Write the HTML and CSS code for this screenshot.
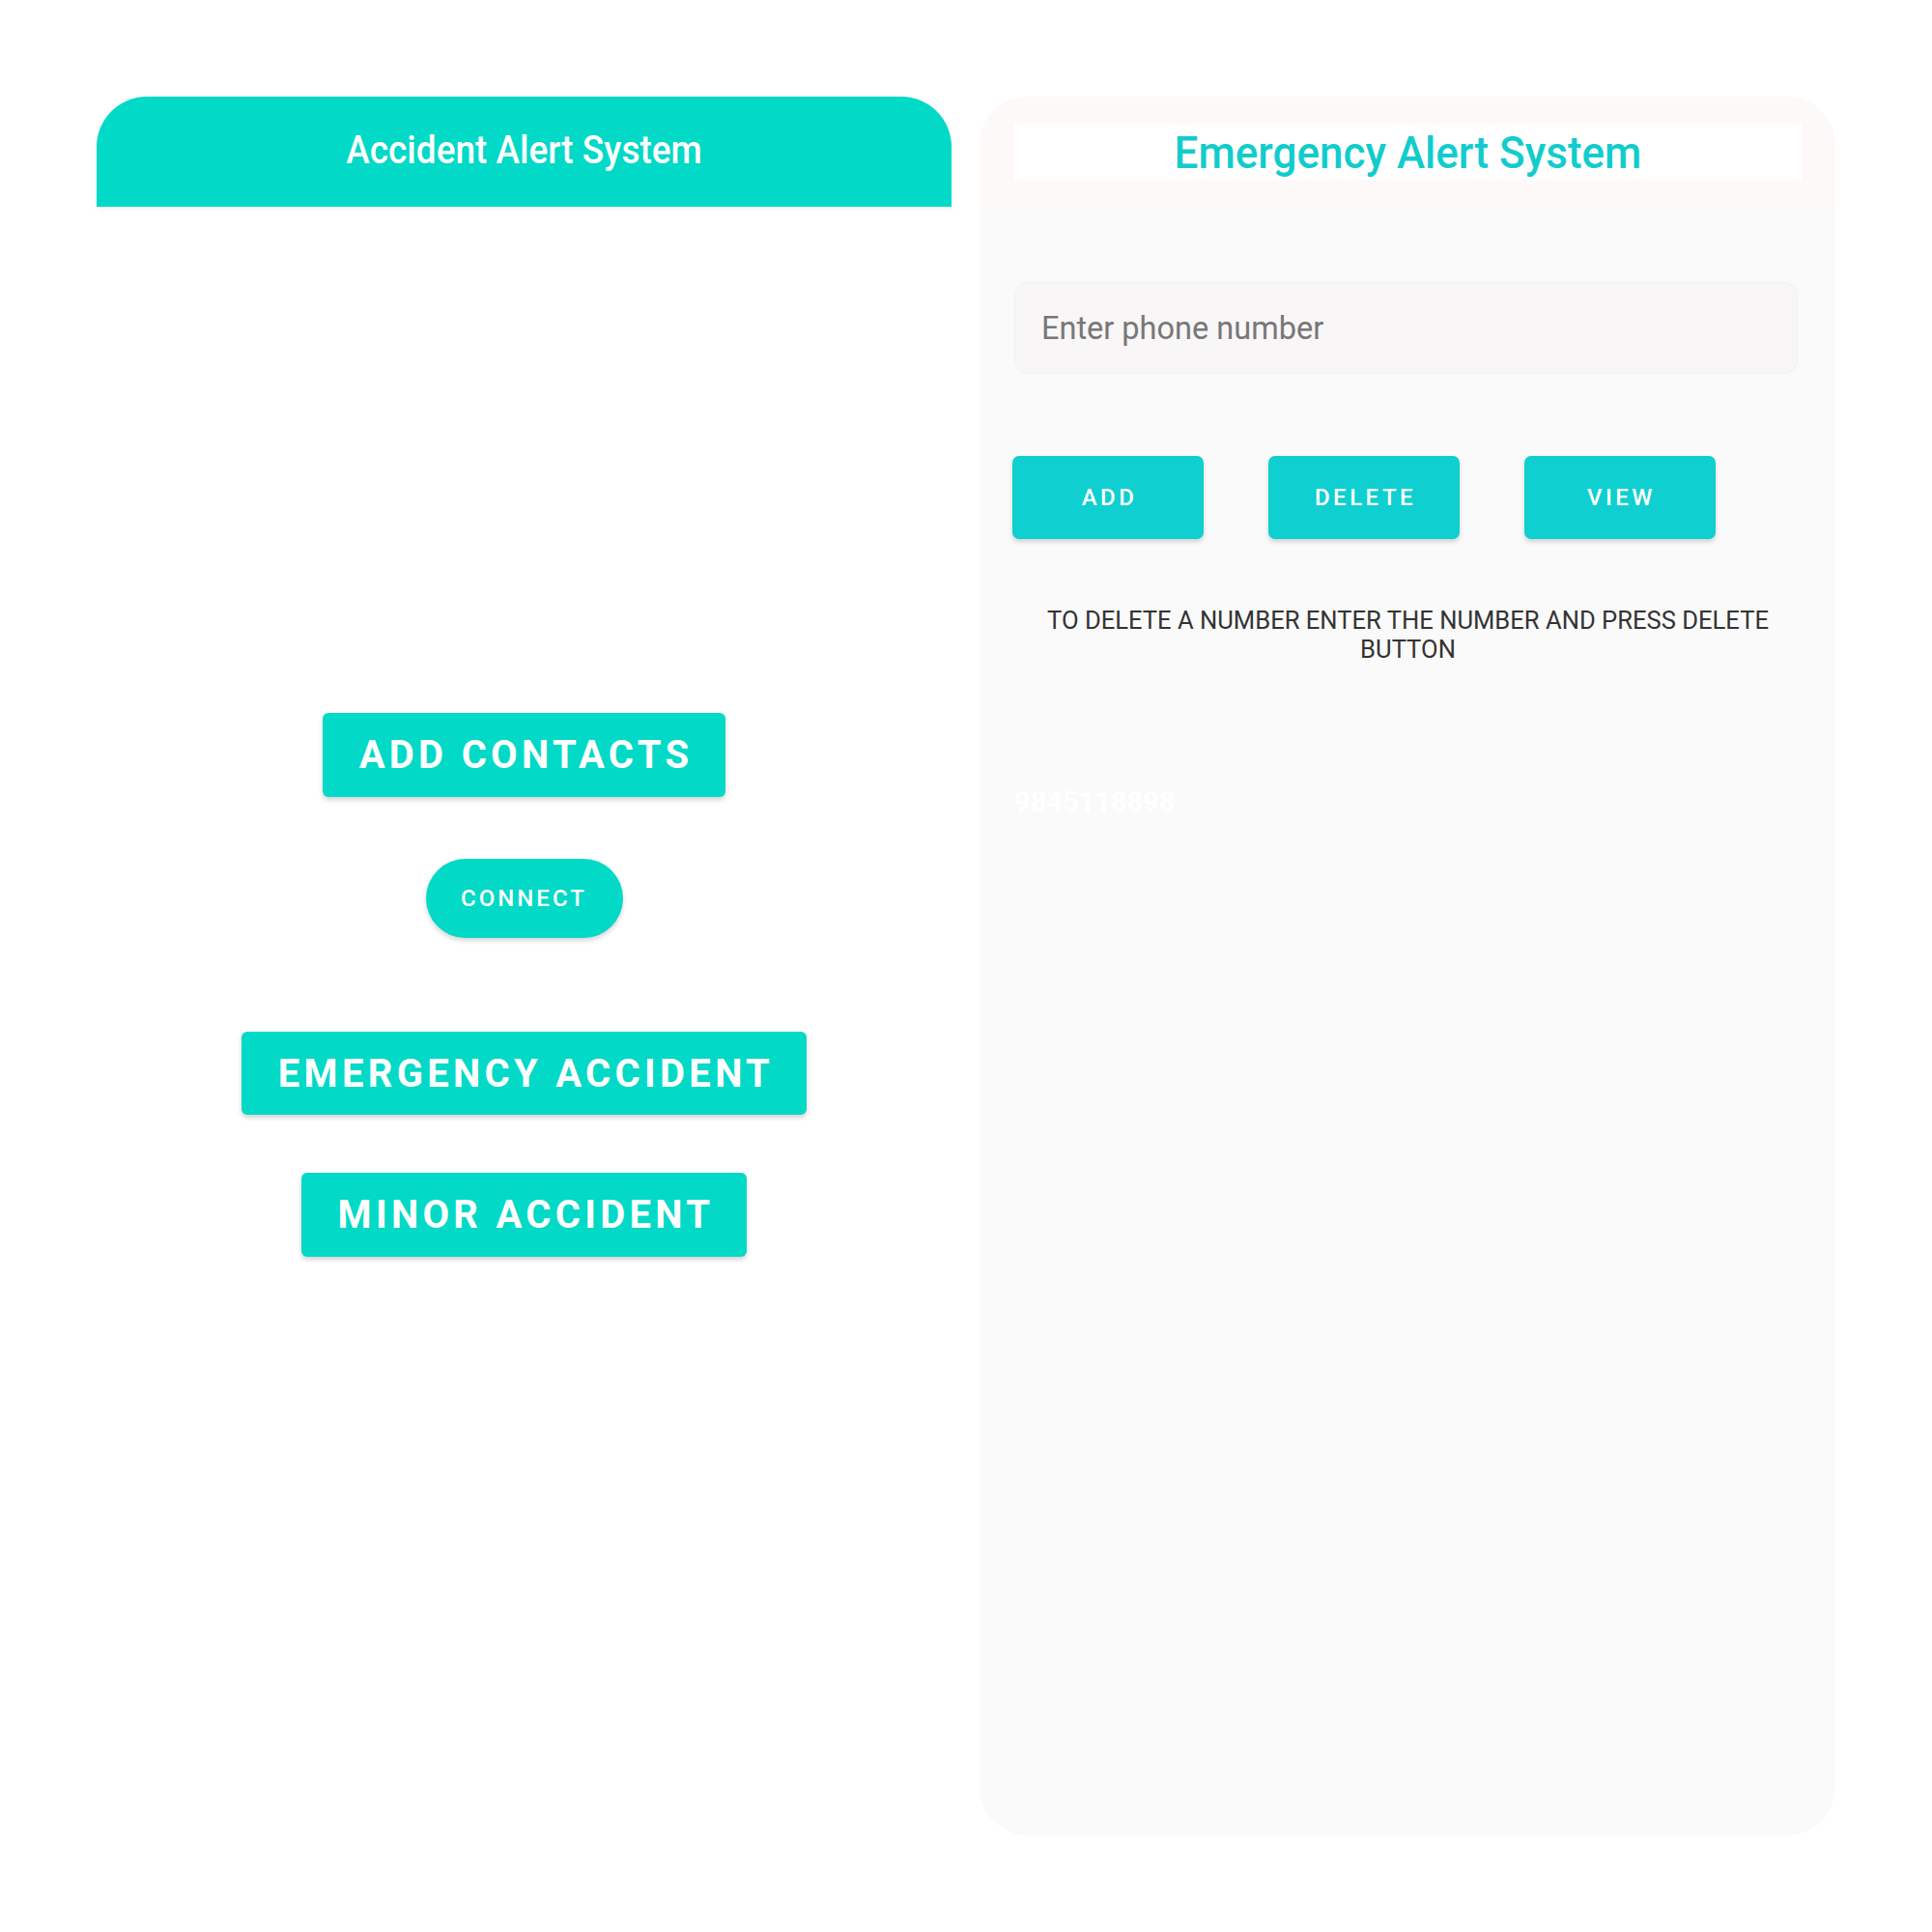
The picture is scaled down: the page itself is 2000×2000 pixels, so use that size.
FILE: index.html
```html
<!DOCTYPE html>
<html>
<head>
<meta charset="utf-8">
<link rel="stylesheet" href="styles.css">
</head>
<body>
<div class="page">
  <section class="panel left">
    <header class="left-bar"><span class="left-title">Accident Alert System</span></header>
    <div class="left-body">
      <button class="big-btn b-contacts">ADD CONTACTS</button>
      <button class="pill-btn">CONNECT</button>
      <button class="big-btn b-emergency">EMERGENCY ACCIDENT</button>
      <button class="big-btn b-minor">MINOR ACCIDENT</button>
    </div>
  </section>
  <section class="panel right">
    <div class="right-top">
      <div class="toolbar"><span class="right-title">Emergency Alert System</span></div>
    </div>
    <div class="right-body">
      <div class="input"><span class="placeholder">Enter phone number</span></div>
      <div class="btn-row">
        <button class="small-btn">ADD</button>
        <button class="small-btn">DELETE</button>
        <button class="small-btn">VIEW</button>
      </div>
      <p class="hint">TO DELETE A NUMBER ENTER THE NUMBER AND PRESS DELETE<br>BUTTON</p>
      <div class="number">9845118898</div>
    </div>
  </section>
</div>
</body>
</html>
```
FILE: styles.css
```css
* { box-sizing: border-box; }
html, body { margin: 0; padding: 0; background: #ffffff; }
body { font-family: Roboto, "Noto Sans", sans-serif; }
.page {
  display: flex;
  gap: 29px;
  padding: 100px 0 0 100px;
  width: 2000px;
  height: 2000px;
}
.panel { height: 1800px; }
.left { width: 885px; background: #ffffff; }
.left-bar {
  height: 114px;
  background: #02d9c6;
  border-radius: 52px 52px 0 0;
  display: flex;
  align-items: center;
  justify-content: center;
  box-shadow: 0 3px 6px rgba(0, 0, 0, 0.05);
}
.left-title {
  color: #ffffff;
  font-weight: 500;
  font-size: 37px;
  margin-top: -3px;
  display: inline-block;
  transform: scaleY(1.08);
}
.left-body {
  display: flex;
  flex-direction: column;
  align-items: center;
  padding-top: 524px;
}
button {
  font-family: Roboto, "Noto Sans", sans-serif;
  border: none;
  color: #ffffff;
  cursor: pointer;
}
.big-btn {
  background: #02d9c6;
  height: 87px;
  border-radius: 6px;
  font-size: 40px;
  font-weight: 700;
  letter-spacing: 4.3px;
  padding: 0 34px 0 38px;
  box-shadow: 0 3px 5px rgba(0, 0, 0, 0.18);
}
.pill-btn {
  background: #02d9c6;
  height: 82px;
  width: 204px;
  border-radius: 41px;
  font-size: 24px;
  font-weight: 500;
  letter-spacing: 3px;
  padding-left: 6px;
  margin-top: 64px;
  box-shadow: 0 3px 5px rgba(0, 0, 0, 0.16);
}
.b-emergency { margin-top: 97px; height: 86px; }
.b-minor { margin-top: 60px; }

.right {
  width: 886px;
  background: #fafafa;
  border-radius: 50px;
  overflow: hidden;
}
.right-top {
  background: #fcf9f8;
  height: 120px;
  padding: 29px 35px 0 36px;
}
.toolbar {
  background: #ffffff;
  height: 57px;
  display: flex;
  align-items: center;
  justify-content: center;
}
.right-title {
  color: #12cccc;
  font-size: 44px;
  font-weight: 500;
  display: inline-block;
  transform: scaleY(1.06);
}
.right-body {
  padding: 72px 35px 0 36px;
  display: flex;
  flex-direction: column;
}
.input {
  height: 95px;
  background: #f8f6f6;
  border: 1px solid #f3f0f0;
  border-radius: 14px;
  display: flex;
  align-items: center;
  padding-left: 27px;
  margin-right: 4px;
}
.placeholder {
  color: #777777;
  font-size: 32.5px;
}
.btn-row {
  display: flex;
  gap: 67px;
  margin-top: 85px;
  margin-left: -2px;
}
.small-btn {
  width: 198px;
  height: 86px;
  background: #0fcfd0;
  border-radius: 7px;
  font-size: 24px;
  font-weight: 500;
  letter-spacing: 3.5px;
  padding-left: 9px;
  box-shadow: 0 3px 5px rgba(0, 0, 0, 0.16);
}
.hint {
  margin: 69px 0 0 0;
  text-align: center;
  color: #333333;
  font-size: 25.6px;
  line-height: 30px;
}
.number {
  margin-top: 126px;
  color: #ffffff;
  font-weight: 700;
  font-size: 29px;
  line-height: 34px;
}
```
